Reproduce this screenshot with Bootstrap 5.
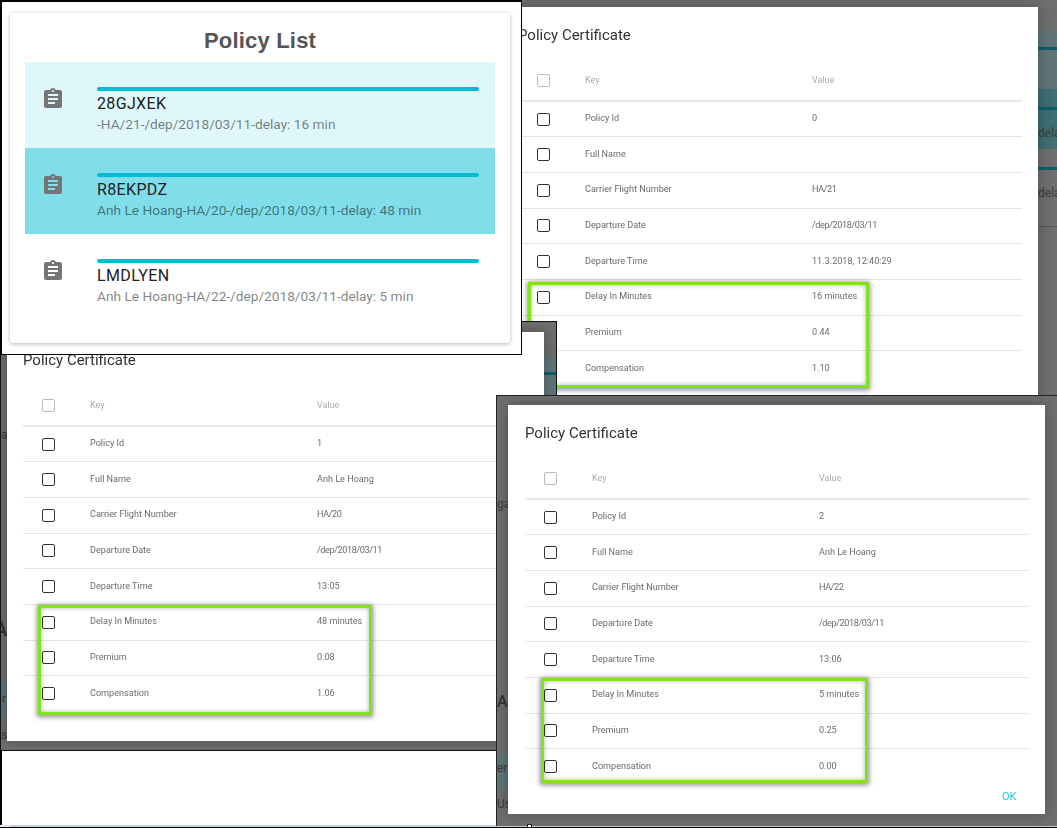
<!DOCTYPE html>
<html lang="en">
<head>
  <meta charset="UTF-8">
  <title>Policy screenshots</title>
  <link href="https://cdn.jsdelivr.net/npm/bootstrap@5.3.3/dist/css/bootstrap.min.css" rel="stylesheet">
  <style>
    body { background: #fff; font-family: Roboto, "Liberation Sans", sans-serif; overflow: hidden; }
    .canvas { position: relative; width: 1057px; height: 828px; overflow: hidden; }

    /* screenshots pasted on the canvas */
    .shot { position: absolute; overflow: hidden; background: #6f6f6f; }
    .shot-list { left: 0; top: 0; width: 522px; height: 355px; z-index: 4; background: #fff; border: 2px solid #000; border-width: 2px 1px 1px 2px; padding: 11px 10px 0 8px; }
    .shot-b { left: 501px; top: 0; width: 556px; height: 396px; z-index: 1; padding-top: 7px; border-bottom: 1px solid #222; }
    .shot-c { left: 0; top: 321px; width: 557px; height: 430px; z-index: 2; padding: 10px 0 0 6px; border: 1px solid #111; }
    .shot-d { left: 496px; top: 395px; width: 561px; height: 431px; z-index: 3; padding: 9px 0 0 11px; border: 1px solid #222; border-width: 1px 0 0 1px; }
    .page-strip { position: absolute; left: 0; right: 0; top: 825px; height: 3px; background: #c4d0dd; border-bottom: 1px solid #000; }
    .page-strip::before { content: ""; display: block; width: 10px; height: 2px; background: #e4eaf2; }
    .left-rule { position: absolute; left: 0; top: 750px; bottom: 0; width: 2px; background: #000; }

    /* list card */
    .list-card { width: 500px; height: 330px; border: 0; border-radius: 3px; box-shadow: 0 1px 4px rgba(0,0,0,.3); padding: 0 15px; }
    .list-title { font-family: "Liberation Sans", sans-serif; font-size: 22px; font-weight: 700; color: #555; height: 49px; line-height: 55px; margin: 0; letter-spacing: .2px; }
    .policy-item { height: 86px; padding: 25px 16px 0 16px; gap: 32px; border: 0; border-radius: 0 !important; background: #fff; }
    .policy-item.tint-1 { background: #e0f7fa; }
    .policy-item.tint-2 { background: #80deea; }
    .policy-icon { width: 24px; height: 24px; fill: #757575; flex: none; }
    .policy-bar { height: 4px; background: #00bcd4; border-radius: 2px; }
    .policy-code { font-size: 16px; line-height: 22px; color: #212121; margin-top: 2px; letter-spacing: .35px; }
    .policy-sub { font-size: 13.7px; line-height: 18px; color: rgba(0,0,0,.5); }

    /* certificate dialog */
    .cert { position: relative; width: 537px; height: 409px; background: #fff; box-shadow: 0 0 14px rgba(0,0,0,.3); color: #666; filter: blur(.3px); }
    .cert-title { height: 52px; padding: 19px 0 0 17px; font-size: 15px; line-height: 18px; color: #333; margin: 0; font-weight: 400; }
    .cert-table { width: 504px; margin: 0 0 0 17px; table-layout: fixed; font-size: 9.1px; }
    .cert-table td, .cert-table th { padding: 0; height: 35.7px; vertical-align: middle; border-bottom: 1px solid #e4e4e4; color: #6b6b6b; font-weight: 400; background: transparent; }
    .cert-table tbody tr:last-child td { border-bottom: 0; }
    .cert-table th { height: 42px; padding-top: 2px; border-bottom-width: 2px; border-color: #e8e8e8; color: #aaa; font-size: 9px; }
    .cert-table .col-box { width: 67px; padding-left: 19px; }
    .cert-table .col-key { width: 227px; }
    .cert-table .val-tight { letter-spacing: -.4px; }
    .fake-check { display: block; width: 13px; height: 13px; border: 1.7px solid #333; border-radius: 2px; }
    th .fake-check { border-color: #bbb; }
    .cert-ok { position: absolute; left: 494px; top: 385px; font-size: 11px; line-height: 14px; color: #26c6da; }
    .mark-box { position: absolute; border: 3px solid #7fe41c; box-shadow: 0 1px 5px 1px rgba(0,0,0,.45), inset 0 0 5px rgba(0,0,0,.3); }
    .shot-b .mark-box { left: 27px; top: 275px; width: 341px; height: 106px; }
    .shot-c .mark-box { left: 31px; top: 273px; width: 334px; height: 110px; }
    .shot-d .mark-box { left: 33px; top: 273px; width: 327px; height: 105px; }
    .shot-c .cert-table { margin-left: 16px; }
    .shot-c .cert-title { padding-left: 16px; }

    /* page behind the dialogs, only seen in the strips */
    .ghost { position: absolute; }
    .ghost-band { width: 20px; height: 60px; background: #5f7679; }
    .ghost-band-dark { background: #3f6e73; }
    .ghost-line { width: 20px; height: 3px; background: #0b5f68; }
    .ghost-text { font-size: 12px; line-height: 14px; color: #3c3c3c; }
    .ghost-big { font-size: 20px; line-height: 22px; font-weight: 500; color: #333; }
    .g1 { left: 537px; top: 30px; }
    .g2 { left: 537px; top: 47px; }
    .g3 { left: 537px; top: 89px; }
    .g4 { left: 537px; top: 107px; }
    .g5 { left: 537px; top: 126px; }
    .g6 { left: 537px; top: 167px; }
    .g7 { left: 537px; top: 186px; }
    .g8 { left: 537px; top: 226px; height: 1px; background: #555; }
    .c1 { left: 542px; top: 34px; width: 14px; height: 40px; }
    .c2 { left: 542px; top: 50px; width: 14px; }
    .c3 { left: 0; top: 106px; }
    .c4 { left: -7px; top: 296px; }
    .c5 { left: 0; top: 358px; width: 6px; height: 38px; }
    .c6 { left: 1px; top: 370px; }
    .c7 { left: 0; top: 406px; }
    .d1 { left: 0; top: 101px; }
    .d2 { left: 0; top: 295px; font-size: 16px; }
    .d3 { left: 0; top: 359px; width: 11px; height: 36px; }
    .d4 { left: 0; top: 365px; }
    .d5 { left: 0; top: 401px; }
    .tiny-square { position: absolute; left: 527px; top: 824px; width: 5px; height: 4px; background: #fff; border: 1px solid #222; z-index: 5; }
  </style>
</head>
<body>
  <div class="canvas" id="canvas">
    <div class="shot shot-list">
      <div class="card list-card">
        <h1 class="list-title text-center">Policy List</h1>
        <div class="list-group list-group-flush" id="policyList"></div>
      </div>
    </div>
    <div class="left-rule"></div>
    <div class="page-strip"></div>
    <div class="tiny-square"></div>
  </div>

  <script>
    const clipboardPath = 'M19 3h-4.18C14.4 1.84 13.3 1 12 1c-1.3 0-2.4.84-2.82 2H5c-1.1 0-2 .9-2 2v14c0 1.1.9 2 2 2h14c1.1 0 2-.9 2-2V5c0-1.1-.9-2-2-2zm-7 0c.55 0 1 .45 1 1s-.45 1-1 1-1-.45-1-1 .45-1 1-1zm2 14H7v-2h7v2zm3-4H7v-2h10v2zm0-4H7V7h10v2z';

    const policies = [
      { code: '28GJXEK', sub: '-HA/21-/dep/2018/03/11-delay: 16 min', tint: 'tint-1' },
      { code: 'R8EKPDZ', sub: 'Anh Le Hoang-HA/20-/dep/2018/03/11-delay: 48 min', tint: 'tint-2' },
      { code: 'LMDLYEN', sub: 'Anh Le Hoang-HA/22-/dep/2018/03/11-delay: 5 min', tint: '' }
    ];

    const certificates = [
      {
        shot: 'shot-b', id: '0', name: '', flight: 'HA/21', time: '11.3.2018, 12:40:29', delay: '16 minutes', premium: '0.44', comp: '1.10', ok: false,
        ghosts: `<div class="ghost ghost-band g1"></div><div class="ghost ghost-line g2"></div>
                 <div class="ghost ghost-band ghost-band-dark g3"></div><div class="ghost ghost-line g4"></div>
                 <div class="ghost ghost-text g5">dela</div><div class="ghost ghost-line g6"></div>
                 <div class="ghost ghost-text g7">dela</div><div class="ghost ghost-line g8"></div>`
      },
      {
        shot: 'shot-c', id: '1', name: 'Anh Le Hoang', flight: 'HA/20', time: '13:05', delay: '48 minutes', premium: '0.08', comp: '1.06', ok: false,
        ghosts: `<div class="ghost ghost-band c1"></div><div class="ghost ghost-line c2"></div>
                 <div class="ghost ghost-text c3">a</div><div class="ghost ghost-big c4">A</div>
                 <div class="ghost ghost-band c5"></div><div class="ghost ghost-text c6">r</div><div class="ghost ghost-text c7">s</div>`
      },
      {
        shot: 'shot-d', id: '2', name: 'Anh Le Hoang', flight: 'HA/22', time: '13:06', delay: '5 minutes', premium: '0.25', comp: '0.00', ok: true,
        ghosts: `<div class="ghost ghost-text d1">ga</div><div class="ghost ghost-big d2">A</div>
                 <div class="ghost ghost-band d3"></div><div class="ghost ghost-text d4">er</div><div class="ghost ghost-text d5">Us</div>`
      }
    ];

    // Policy list rows
    document.getElementById('policyList').innerHTML = policies.map(p => `
      <div class="list-group-item policy-item d-flex ${p.tint}">
        <svg class="policy-icon" viewBox="0 0 24 24"><path d="${clipboardPath}"/></svg>
        <div class="flex-grow-1">
          <div class="policy-bar"></div>
          <div class="policy-code">${p.code}</div>
          <div class="policy-sub">${p.sub}</div>
        </div>
      </div>`).join('');

    // Certificate dialogs
    const canvas = document.getElementById('canvas');
    certificates.forEach(c => {
      const rows = [
        ['Policy Id', c.id],
        ['Full Name', c.name],
        ['Carrier Flight Number', c.flight],
        ['Departure Date', '/dep/2018/03/11'],
        ['Departure Time', c.time],
        ['Delay In Minutes', c.delay],
        ['Premium', c.premium],
        ['Compensation', c.comp]
      ];
      const shot = document.createElement('div');
      shot.className = 'shot ' + c.shot;
      shot.innerHTML = `
        ${c.ghosts}
        <div class="cert">
          <h2 class="cert-title">Policy Certificate</h2>
          <table class="table cert-table mb-0">
            <thead><tr><th class="col-box"><span class="fake-check"></span></th><th class="col-key">Key</th><th>Value</th></tr></thead>
            <tbody>
              ${rows.map(r => `<tr><td class="col-box"><span class="fake-check"></span></td><td>${r[0]}</td><td class="${r[1].includes('/') ? 'val-tight' : ''}">${r[1]}</td></tr>`).join('')}
            </tbody>
          </table>
          <div class="mark-box"></div>
          ${c.ok ? '<div class="cert-ok">OK</div>' : ''}
        </div>`;
      canvas.appendChild(shot);
    });
  </script>
  <script src="https://cdn.jsdelivr.net/npm/bootstrap@5.3.3/dist/js/bootstrap.bundle.min.js"></script>
</body>
</html>
